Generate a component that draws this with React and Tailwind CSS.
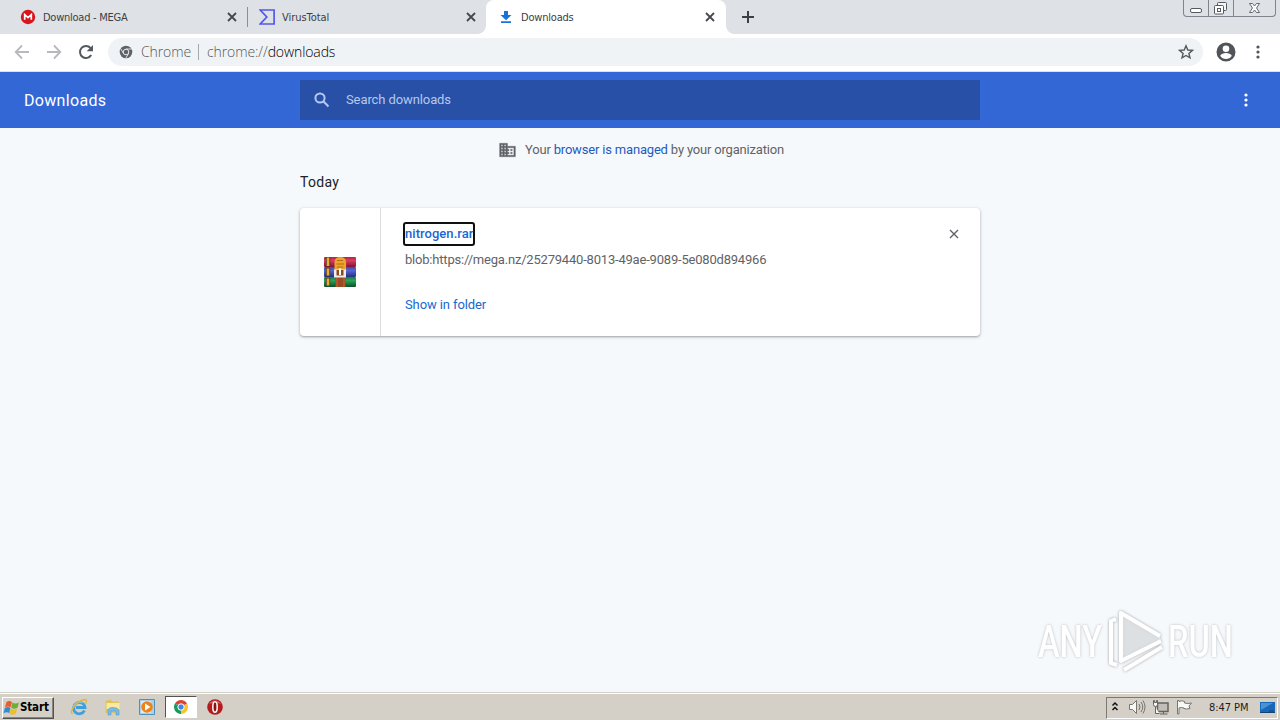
function MegaIcon() {
  return (
    <svg width="16" height="16" viewBox="0 0 16 16" className="shrink-0">
      <circle cx="8" cy="8" r="7.2" fill="#d9141c" />
      <path d="M4.7 10.8V5.6L8 8.6l3.3-3v5.2" fill="none" stroke="#fff" strokeWidth="1.7" />
    </svg>
  )
}

function VirusTotalIcon() {
  return (
    <svg width="16" height="16" viewBox="0 0 16 16" className="shrink-0">
      <path d="M1.2 1h13.9v14H1.2l6.6-7z" fill="none" stroke="#5358e8" strokeWidth="1.7" />
    </svg>
  )
}

function DownloadIcon() {
  return (
    <svg width="16" height="16" viewBox="0 0 16 16" className="shrink-0">
      <path d="M6 2h4v4h3.500L8 11.300 2.500 6H6zM3 12.300h10V14H3z" fill="#1a73d8" />
    </svg>
  )
}

function CloseIcon({ size = 16, color = '#45484d', width = 1.8 }) {
  return (
    <svg width={size} height={size} viewBox="0 0 16 16" className="shrink-0">
      <path d="M4 4l8 8M12 4l-8 8" stroke={color} strokeWidth={width} />
    </svg>
  )
}

function DotsIcon({ color }) {
  return (
    <svg width="16" height="16" viewBox="0 0 16 16" fill={color}>
      <circle cx="8" cy="3" r="1.6" />
      <circle cx="8" cy="8" r="1.6" />
      <circle cx="8" cy="13" r="1.6" />
    </svg>
  )
}

function WindowButtons() {
  return (
    <div className="ml-auto mr-[4px] flex h-[17px] w-[93px] rounded-b-[4px] border border-t-0 border-[#80848d] bg-[#dee1e6]">
      <svg width="91" height="16" viewBox="0 0 91 16" fill="none" stroke="#555960">
        <path d="M24.500 0v16M49.500 0v16" stroke="#80848d" />
        <rect x="6.500" y="8.500" width="11" height="4" rx="1.500" fill="#fff" />
        <rect x="33.500" y="2.500" width="9" height="8" rx="1" fill="#f3f4f5" />
        <rect x="30.500" y="5.500" width="9" height="8.500" rx="1" fill="#fff" />
        <rect x="33.500" y="8.500" width="3" height="3" />
        <path d="M65.500 3.500h3l2 2.500 2-2.500h3l-3 4.500 3 4.500h-3l-2-2.500-2 2.500h-3l3-4.500z" fill="#fff" strokeWidth=".9" />
      </svg>
    </div>
  )
}

function TabStrip() {
  return (
    <div className="flex h-[34px] shrink-0 bg-[#dee1e6] font-['DejaVu_Sans_Condensed','DejaVu_Sans',sans-serif] text-[11px] text-[#3c4043]">
      <div className="flex w-[247px] items-center pl-[20px] pr-[7px]">
        <MegaIcon />
        <span className="ml-[7px] grow whitespace-nowrap pt-[2px] tracking-[-0.25px]">Download - MEGA</span>
        <CloseIcon />
      </div>
      <div className="mt-[7px] h-[20px] w-px bg-[#8b8f96]" />
      <div className="flex w-[238px] items-center pl-[11px] pr-[7px]">
        <VirusTotalIcon />
        <span className="ml-[7px] grow whitespace-nowrap pt-[2px] tracking-[-0.05px]">VirusTotal</span>
        <CloseIcon />
      </div>
      <div className="relative flex w-[240px] items-center rounded-t-[8px] bg-white pl-[12px] pr-[8px]">
        <span className="absolute -left-[8px] bottom-0 size-[8px] bg-[radial-gradient(circle_at_0_0,transparent_7.5px,#fff_8px)]" />
        <span className="absolute -right-[8px] bottom-0 size-[8px] bg-[radial-gradient(circle_at_100%_0,transparent_7.5px,#fff_8px)]" />
        <DownloadIcon />
        <span className="ml-[7px] grow whitespace-nowrap pt-[2px] tracking-[-0.2px]">Downloads</span>
        <CloseIcon />
      </div>
      <svg width="16" height="16" viewBox="0 0 16 16" className="ml-[14px] mt-[9px]">
        <path d="M8 2v12M2 8h12" stroke="#3c4043" strokeWidth="2" />
      </svg>
      <WindowButtons />
    </div>
  )
}

function Toolbar() {
  return (
    <div className="flex h-[38px] shrink-0 items-center border-b border-[#dcdfe4] bg-white pb-px pl-[14px] pr-[14px]">
      <svg width="16" height="16" viewBox="0 0 16 16" fill="none" stroke="#b7b9bc" strokeWidth="1.8">
        <path d="M15 8H2M8 1.500L1.700 8 8 14.500" />
      </svg>
      <svg width="16" height="16" viewBox="0 0 16 16" fill="none" stroke="#b7b9bc" strokeWidth="1.8" className="ml-[16px]">
        <path d="M1 8h13M8 1.500L14.300 8 8 14.500" />
      </svg>
      <svg width="16" height="16" viewBox="0 0 16 16" className="ml-[16px]">
        <path d="M13.200 11A6 6 0 1 1 12.500 4" fill="none" stroke="#55585c" strokeWidth="2" />
        <path d="M15 1v6.300H8.700z" fill="#55585c" />
      </svg>
      <div className="ml-[14px] flex h-[28px] w-[1095px] items-center rounded-full bg-[#f0f3f5] pl-[11px] pr-[9px] font-['Open_Sans',sans-serif] text-[14px] font-light text-[#55585c]">
        <svg width="14" height="14" viewBox="0 0 14 14">
          <circle cx="7" cy="7" r="6.300" fill="#5f6368" />
          <circle cx="7" cy="7" r="2.800" fill="#5f6368" stroke="#e8eaed" strokeWidth="1" />
          <path d="M7 4h5.800M4.500 8.500L1.700 3.600M9.500 8.500L6.800 13.200" stroke="#e8eaed" strokeWidth=".9" />
        </svg>
        <span className="ml-[8px] w-[50px] whitespace-nowrap pb-[2px] tracking-[-0.1px]">Chrome</span>
        <span className="ml-[7px] mr-[8px] h-[16px] w-px bg-[#a5a8ac]" />
        <span className="grow whitespace-nowrap pb-[2px] tracking-[-0.1px]">chrome://<span className="text-black">downloads</span></span>
        <svg width="16" height="16" viewBox="0 0 16 16" fill="none" stroke="#55585c" strokeWidth="1.400">
          <path d="M8 1.800l1.800 4.200 4.600.4-3.500 3 1.100 4.500L8 11.500l-4 2.400 1.100-4.500-3.500-3 4.600-.4z" />
        </svg>
      </div>
      <svg width="24" height="24" viewBox="0 0 24 24" className="ml-[11px]">
        <path
          d="M12 2.500a9.500 9.500 0 1 0 0 19 9.500 9.500 0 0 0 0-19zm0 3a3.300 3.300 0 1 1 0 6.600 3.300 3.300 0 0 1 0-6.600zm0 13.500c-2.400 0-4.500-1.200-5.700-3 .1-1.900 3.800-2.900 5.700-2.900s5.700 1 5.700 2.900c-1.200 1.800-3.300 3-5.700 3z"
          fill="#515459"
        />
      </svg>
      <span className="ml-auto"><DotsIcon color="#515459" /></span>
    </div>
  )
}

function PageHeader() {
  return (
    <header className="flex h-[56px] shrink-0 items-center bg-[#3367d6] pl-[24px] pr-[26px]">
      <h1 className="w-[276px] pt-px text-[16px] tracking-[0.32px] text-white">Downloads</h1>
      <div className="flex h-[40px] w-[680px] items-center bg-[#2850a7] pl-[12px]">
        <svg width="20" height="20" viewBox="0 0 20 20" fill="none" stroke="#b6c8ed" strokeWidth="2">
          <circle cx="8" cy="8" r="4.600" />
          <path d="M11.300 11.300l5.200 5.200" />
        </svg>
        <span className="ml-[14px] text-[13px] tracking-[-0.1px] text-[#b6c8ed]">Search downloads</span>
      </div>
      <span className="ml-auto"><DotsIcon color="#fff" /></span>
    </header>
  )
}

function RarIcon() {
  return (
    <svg width="32" height="32" viewBox="0 0 32 32">
      <defs>
        <linearGradient id="red" x2="0" y2="1">
          <stop stopColor="#b32345" />
          <stop offset=".35" stopColor="#dc3c5e" />
          <stop offset="1" stopColor="#7c1235" />
        </linearGradient>
        <linearGradient id="blue" x2="0" y2="1">
          <stop stopColor="#3f4aa8" />
          <stop offset=".35" stopColor="#5665d6" />
          <stop offset="1" stopColor="#25307e" />
        </linearGradient>
        <linearGradient id="green" x2="0" y2="1">
          <stop stopColor="#1d7c42" />
          <stop offset=".35" stopColor="#2aa557" />
          <stop offset="1" stopColor="#0c4d2a" />
        </linearGradient>
      </defs>
      <rect y="1" width="32" height="10" rx="1" fill="url(#red)" />
      <rect y="11" width="32" height="10" rx="1" fill="url(#blue)" />
      <rect y="21" width="32" height="10" rx="1" fill="url(#green)" />
      <path d="M4 1v9M4 12v8M4 22v8" stroke="#4f3a2c" strokeWidth="4.500" />
      <path d="M4 1.500v8.500M4 12.500v7M4 22.500v7" stroke="#e3b02f" strokeWidth="2.600" />
      <path d="M11.500 20h10v11h-10z" fill="#9c4a24" />
      <path d="M13 22v9M20 22v9" stroke="#c06a3a" />
      <path d="M10.500 16V6.500q0-5.500 5.800-5.500t5.800 5.500V16z" fill="#eca42b" />
      <path d="M13 4.500h6M12.500 8h7.500M13 11h6.500" stroke="#b66b17" />
      <path d="M10 13.500h12v8H10z" fill="#efefef" />
      <path d="M12.500 14h7v5.500h-7z" fill="#8e4a1d" />
      <path d="M16 12.500v6.500" stroke="#fff" strokeWidth="2" />
    </svg>
  )
}

function DownloadCard() {
  return (
    <div className="flex h-[128px] rounded-[4px] bg-white shadow-[0_1px_2px_rgba(60,64,67,0.35),0_1px_3px_1px_rgba(60,64,67,0.12)]">
      <div className="flex w-[81px] items-center justify-center border-r border-[#dadce0]">
        <RarIcon />
      </div>
      <div className="flex grow flex-col items-start pl-[22px] pt-[14px] text-[13px]">
        <a className="h-[24px] w-[72px] whitespace-nowrap rounded-[3px] border-2 border-[#101010] font-medium leading-[20px] tracking-[0.05px] text-[#1967d2]">nitrogen.rar</a>
        <span className="ml-[2px] mt-[4px] leading-[20px] tracking-[-0.2px] text-[#5f6368]">blob:https://mega.nz/25279440-8013-49ae-9089-5e080d894966</span>
        <a className="ml-[2px] mt-[25px] leading-[20px] tracking-[-0.1px] text-[#1967d2]">Show in folder</a>
      </div>
      <div className="pr-[18px] pt-[18px]">
        <CloseIcon color="#5f6368" width={1.4} />
      </div>
    </div>
  )
}

function Watermark() {
  return (
    <div className="absolute right-[46px] top-[482px] flex h-[64px] items-center font-['Roboto',sans-serif] text-[44px] font-medium text-white [text-shadow:0_0_3px_#b4b8ba]">
      <span className="inline-block w-[67px] origin-left scale-x-[0.74] whitespace-nowrap">ANY</span>
      <svg width="63" height="64" viewBox="0 0 63 64" fill="none" stroke="#fff" strokeWidth="4" strokeLinejoin="round" className="overflow-visible drop-shadow-[0_0_1.5px_#9da1a3]">
        <path d="M11 9l-5 2v42l6 2" />
        <path d="M55 26L16 3v48l40-20" fill="#eef1f3" fillOpacity=".6" />
        <path d="M19 60l38-23" />
      </svg>
      <span className="inline-block w-[66px] origin-left scale-x-[0.74] whitespace-nowrap">RUN</span>
    </div>
  )
}

function BuildingIcon() {
  return (
    <svg width="19" height="18" viewBox="0 0 24 24" preserveAspectRatio="none" className="mr-[8px]">
      <path
        d="M12 7V3H2v18h20V7H12zM6 19H4v-2h2v2zm0-4H4v-2h2v2zm0-4H4V9h2v2zm0-4H4V5h2v2zm4 12H8v-2h2v2zm0-4H8v-2h2v2zm0-4H8V9h2v2zm0-4H8V5h2v2zm10 12h-8v-2h2v-2h-2v-2h2v-2h-2V9h8v10zm-2-8h-2v2h2v-2zm0 4h-2v2h2v-2z"
        fill="#5f6368"
        stroke="#5f6368"
        strokeWidth=".4"
      />
    </svg>
  )
}

function DownloadsPage() {
  return (
    <main className="relative flex grow flex-col bg-[#f6f9fc]">
      <div className="flex h-[44px] items-center justify-center pl-[2px] text-[13px] tracking-[-0.18px] text-[#5f6368]">
        <BuildingIcon />
        <p>Your <a className="text-[#1e5bbe]">browser is managed</a> by your organization</p>
      </div>
      <section className="mx-auto w-[680px]">
        <h2 className="mb-[14px] h-[22px] text-[14px] leading-[21px] tracking-[0.3px] text-[#202124]">Today</h2>
        <DownloadCard />
      </section>
      <Watermark />
    </main>
  )
}

function TaskbarApps() {
  return (
    <div className="flex items-center pb-px">
      <svg width="18" height="18" viewBox="0 0 18 18" className="ml-[16px]">
        <path d="M14.500 12.500A5.700 5.700 0 1 1 15 9.500H6" fill="none" stroke="#3f9fdc" strokeWidth="2.800" />
        <path d="M3.500 8a6 6 0 0 1 9-3" fill="none" stroke="#8ed0f3" />
        <path d="M2.500 16C-1 13 7 2.500 15 1.500c2 0 1.500 2.500.8 4" fill="none" stroke="#e0b53d" strokeWidth="1.400" />
      </svg>
      <svg width="18" height="18" viewBox="0 0 18 18" className="ml-[16px]">
        <path d="M1.500 3l5-1.500 2 2h6.500V15H1.500z" fill="#e0c25c" />
        <path d="M2.500 5h13v6h-13z" fill="#f8e8a2" />
        <path d="M4 17v-4.500q0-3 5-3t6 3V17h-3v-4H7v4z" fill="#79bbe4" stroke="#5099c6" strokeWidth=".6" />
      </svg>
      <svg width="18" height="18" viewBox="0 0 18 18" className="ml-[16px]">
        <path d="M1.500 1.500h15v15h-15z" fill="#a9d0ec" stroke="#4d91bd" />
        <path d="M3 3h10v12H3z" fill="#d8ebf7" />
        <circle cx="9" cy="9" r="5.800" fill="#ee8418" />
        <path d="M7 5.500v7l5.500-3.500z" fill="#fff" />
      </svg>
      <div className="ml-[9px] flex h-[22px] w-[32px] items-center justify-center border border-b-white border-l-[#55534f] border-r-white border-t-[#55534f] bg-white">
        <svg width="16" height="16" viewBox="0 0 16 16">
          <path d="M8 8L1.940 4.500A7 7 0 0 1 14.060 4.500z" fill="#dd4436" />
          <path d="M8 8l6.060-3.500A7 7 0 0 1 8 15z" fill="#f7c42d" />
          <path d="M8 8v7A7 7 0 0 1 1.940 4.500z" fill="#169c58" />
          <circle cx="8" cy="8" r="3.200" fill="#4285e8" stroke="#fff" />
        </svg>
      </div>
      <svg width="18" height="18" viewBox="0 0 18 18" className="ml-[9px]">
        <circle cx="9" cy="9" r="7.800" fill="#b51a1c" />
        <path d="M3 6a7 7 0 0 1 12 0q-6-2-12 0z" fill="#d9595b" />
        <ellipse cx="9" cy="9" rx="2.200" ry="5.200" fill="#8c1112" stroke="#f5f5f5" strokeWidth="1.600" />
      </svg>
    </div>
  )
}

function Tray() {
  return (
    <div className="ml-auto flex h-[22px] w-[172px] items-center border border-b-white border-l-[#7d7972] border-r-white border-t-[#7d7972] pb-px pl-[3px]">
      <svg width="10" height="12" viewBox="0 0 10 12" fill="none" stroke="#111" strokeWidth="1.500">
        <path d="M2.500 4.500L5 2l2.500 2.500M2.500 9L5 6.500 7.500 9" />
      </svg>
      <svg width="18" height="16" viewBox="0 0 18 16" fill="#f8f8f6" stroke="#77756f" className="ml-[8px]">
        <path d="M1.500 5.500h3l4-4v13l-4-4h-3z" />
        <path d="M11 5q2 3 0 6M13 3q3.500 5 0 10M15 1.500q4 6.500 0 13" fill="none" />
      </svg>
      <svg width="18" height="16" viewBox="0 0 18 16" fill="#f8f8f6" stroke="#65635e" className="ml-[6px]">
        <path d="M5.500 4h10.500v8.500H5.500z" fill="#c0beb9" strokeWidth="1.500" />
        <path d="M8 15h7.500M11.500 12.500v2.500" />
        <path d="M3.500 8v6.500h4M1.500 1.500v4q0 2 2 2t2-2v-4h-1v2h-2v-2z" />
      </svg>
      <svg width="17" height="16" viewBox="0 0 17 16" fill="#f8f8f6" stroke="#77756f" className="ml-[6px]">
        <path d="M1.500 15V1.500h1.500v1q3-1.500 5.500 0v1.500q3 1 7 0l-2.500 3 1 2.500q-4 1-6 0V9q-3-1-5 0v6z" />
      </svg>
      <span className="ml-[16px] w-[44px] whitespace-nowrap pt-[2px] font-['DejaVu_Sans_Condensed','DejaVu_Sans',sans-serif] text-[11px] tracking-[-0.05px] text-[#1c1c1c]">8:47 PM</span>
      <svg width="17" height="15" viewBox="0 0 17 15" className="ml-auto mr-[1px]">
        <rect x="1" y="2" width="15" height="10.500" fill="#1767bb" />
        <path d="M2 3h12L2 10z" fill="#4b92d3" />
        <path d="M1 12.500h15M10 11h5" stroke="#174171" />
      </svg>
    </div>
  )
}

function Taskbar() {
  return (
    <footer className="flex h-[28px] shrink-0 items-center border-t border-[#d4d0c8] bg-[#d4d0c8] pr-[2px] pt-[2px] shadow-[inset_0_1px_0_#fff]">
      <button className="ml-[2px] flex h-[22px] w-[52px] items-center border border-b-[#55534f] border-l-white border-r-[#55534f] border-t-white shadow-[inset_-1px_-1px_0_#888580]">
        <svg width="17" height="16" viewBox="0 0 17 16" className="shrink-0">
          <path d="M3.500 2q2.500-2 5.500 0L7.700 7.300Q5 5.500 2 7.300z" fill="#e85d2c" />
          <path d="M9.500 2.500q3 2 6.500 0l-1.500 5.200q-3 2-6.300 0z" fill="#70ad35" />
          <path d="M1.800 8q3-2 5.700 0L6.200 13.300q-2-2-5.700 0z" fill="#348bd0" />
          <path d="M8 8.500q3 2 6.300 0l-1.500 5.300q-3 2-6.300 0z" fill="#f0bd2d" />
        </svg>
        <span className="whitespace-nowrap pt-px font-['DejaVu_Sans_Condensed','DejaVu_Sans',sans-serif] text-[11.5px] font-bold tracking-[-0.15px] text-black">Start</span>
      </button>
      <TaskbarApps />
      <Tray />
    </footer>
  )
}

export default function App() {
  return (
    <div className="flex h-[720px] w-[1280px] flex-col overflow-hidden bg-white font-['Roboto',sans-serif]">
      <TabStrip />
      <Toolbar />
      <PageHeader />
      <DownloadsPage />
      <Taskbar />
    </div>
  )
}
